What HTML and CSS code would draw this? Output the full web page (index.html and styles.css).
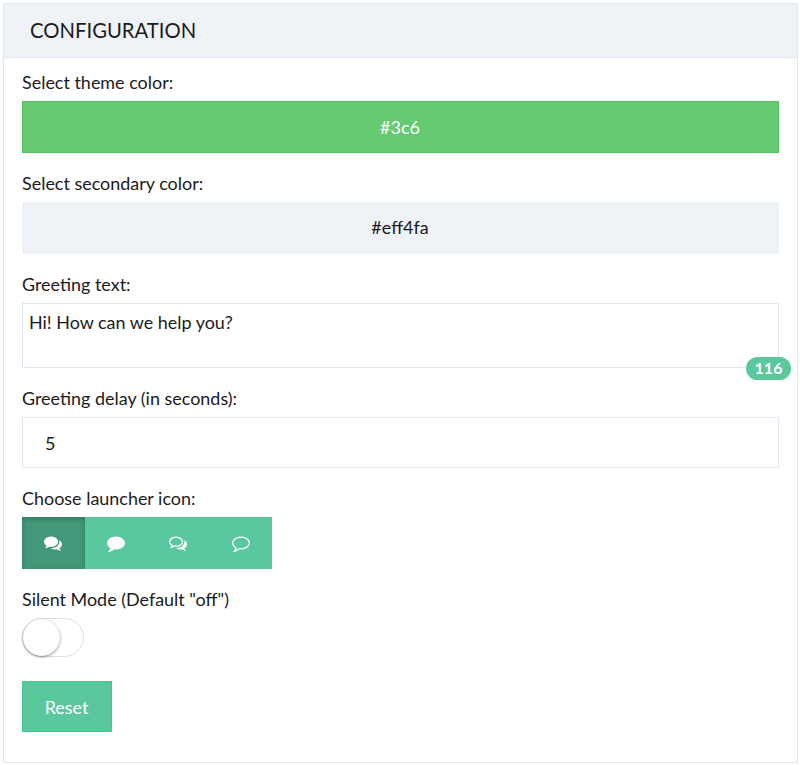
FILE: index.html
```html
<!DOCTYPE html>
<html lang="en">
<head>
<meta charset="utf-8">
<title>Configuration</title>
<link rel="stylesheet" href="styles.css">
</head>
<body>
<section class="panel">
  <header class="panel-header"><h1 class="panel-title">CONFIGURATION</h1></header>
  <div class="panel-body">
    <div class="group">
      <div class="label">Select theme color:</div>
      <div class="swatch swatch-theme">#3c6</div>
    </div>
    <div class="group">
      <div class="label">Select secondary color:</div>
      <div class="swatch swatch-secondary">#eff4fa</div>
    </div>
    <div class="group">
      <div class="label">Greeting text:</div>
      <div class="textarea">Hi! How can we help you?<span class="badge">116</span></div>
    </div>
    <div class="group">
      <div class="label">Greeting delay (in seconds):</div>
      <div class="input">5</div>
    </div>
    <div class="group">
      <div class="label">Choose launcher icon:</div>
      <div class="icons">
        <div class="icon-btn active"><svg viewBox="0 0 1792 1792"><path d="M1408 768q0 139-94 257t-256.5 186.5-353.5 68.5q-86 0-176-16-124 88-278 128-36 9-86 16h-3q-11 0-20.5-8t-11.5-21q-1-3-1-6.5t.5-6.5 2-6l2.5-5 3.5-5.5 4-5 4.5-5 4-4.500q5-6 23-25t26-29.500 22.500-29 25-38.500 20.500-44q-124-72-195-177t-71-224q0-139 94-257t256.500-186.500 353.500-68.500 353.500 68.500 256.500 186.500 94 257zm384 256q0 120-71 224.500t-195 176.500q10 24 20.500 44t25 38.500 22.500 29 26 29.500 23 25q1 1 4 4.500t4.500 5 4 5 3.500 5.500l2.500 5 2 6 .5 6.500-1 6.500q-3 14-13 22t-22 7q-50-7-86-16-154-40-278-128-90 16-176 16-271 0-472-132 58 4 88 4 161 0 309-45t264-129q125-92 192-212t67-254q0-77-23-152 129 71 204 178t75 230z"/></svg></div>
        <div class="icon-btn"><svg viewBox="0 0 1792 1792"><path d="M1792 896q0 174-120 321.500t-326 233-450 85.500q-70 0-145-8-198 175-460 242-49 14-114 22-17 2-30.500-9t-17.500-29v-1q-3-4-.5-12t2-10 4.500-9.500l6-9 7-8.500 8-9q7-8 31-34.500t34.500-38 31-39.500 32.500-51 27-59 26-76q-157-89-247.500-220t-90.500-281q0-130 71-248.500t191-204.500 286-136.500 348-50.500q244 0 450 85.500t326 233 120 321.500z"/></svg></div>
        <div class="icon-btn"><svg viewBox="0 0 1792 1792"><path d="M704 384q-153 0-286 52t-211.500 141-78.500 191q0 82 53 158t149 132l97 56-35 84q34-20 62-39l44-31 53 10q78 14 153 14 153 0 286-52t211.500-141 78.500-191-78.500-191-211.500-141-286-52zm0-128q191 0 353.500 68.500t256.500 186.500 94 257-94 257-256.500 186.500-353.500 68.500q-86 0-176-16-124 88-278 128-36 9-86 16h-3q-11 0-20.500-8t-11.500-21q-1-3-1-6.500t.5-6.500 2-6l2.500-5 3.500-5.500 4-5 4.500-5 4-4.500q5-6 23-25t26-29.500 22.500-29 25-38.500 20.500-44q-124-72-195-177t-71-224q0-139 94-257t256.500-186.500 353.500-68.500zm822 1169q10 24 20.500 44t25 38.500 22.500 29 26 29.500 23 25q1 1 4 4.500t4.500 5 4 5 3.500 5.500l2.500 5 2 6 .5 6.500-1 6.500q-3 14-13 22t-22 7q-50-7-86-16-154-40-278-128-90 16-176 16-271 0-472-132 58 4 88 4 161 0 309-45t264-129q125-92 192-212t67-254q0-77-23-152 129 71 204 178t75 230q0 120-71 224.500t-195 176.500z"/></svg></div>
        <div class="icon-btn"><svg viewBox="0 0 1792 1792"><path d="M896 384q-204 0-381.500 69.500t-282 187.500-104.500 255q0 112 71.500 213.500t201.500 175.500l87 50-27 96q-24 91-70 172 152-63 275-171l43-38 57 6q69 8 130 8 204 0 381.500-69.500t282-187.500 104.500-255-104.500-255-282-187.500-381.500-69.500zm896 512q0 174-120 321.500t-326 233-450 85.500q-70 0-145-8-198 175-460 242-49 14-114 22h-5q-15 0-27-10.500t-16-27.500v-1q-3-4-.5-12t2-10 4.500-9.500l6-9 7-8.500 8-9q7-8 31-34.500t34.500-38 31-39.500 32.500-51 27-59 26-76q-157-89-247.500-220t-90.500-281q0-174 120-321.500t326-233 450-85.500 450 85.500 326 233 120 321.500z"/></svg></div>
      </div>
    </div>
    <div class="group silent">
      <div class="label">Silent Mode (Default "off")</div>
      <div class="toggle"><div class="knob"></div></div>
    </div>
    <button class="reset">Reset</button>
  </div>
</section>
</body>
</html>
```
FILE: styles.css
```css
* { box-sizing: border-box; }
body {
  margin: 0;
  padding: 3px 2px 2px 3px;
  background: #fff;
  color: #1b1b1d;
  font: 17.95px/26px Lato, Carlito, sans-serif;
}
.panel {
  height: 760px;
  border: 1px solid #dfe8f1;
}
.panel-header {
  height: 54px;
  padding: 0 26px;
  background: #eff3f8;
  border-bottom: 1px solid #dfe8f1;
}
.panel-title {
  margin: 0;
  font-size: 20.3px;
  font-weight: 400;
  line-height: 53px;
}
.panel-body { padding: 12px 18px 0; }
.group { margin-bottom: 18px; }
.label { height: 31px; line-height: 25px; }
.swatch {
  height: 52px;
  padding-right: 1px;
  line-height: 51px;
  text-align: center;
}
.swatch-theme {
  background: #65ca72;
  border: 1px solid #50c461;
  line-height: 50px;
  color: #fff;
}
.swatch-secondary { background: #eff3f8; }
.textarea {
  position: relative;
  height: 65px;
  padding: 5px 6px;
  border: 1px solid #dfe8f1;
}
.badge {
  position: absolute;
  right: -13px;
  bottom: -13px;
  width: 45px;
  height: 23px;
  border-radius: 12px;
  background: #5ac89c;
  color: #fff;
  font-size: 16px;
  font-weight: 700;
  line-height: 22px;
  text-align: center;
}
.input {
  height: 51px;
  padding: 0 22px;
  border: 1px solid #dfe8f1;
  line-height: 51px;
}
.icons {
  display: flex;
  width: 250px;
  height: 52px;
  background: #5ac89c;
}
.icon-btn {
  display: flex;
  flex: 1;
  align-items: center;
  justify-content: center;
}
.icon-btn svg { width: 18px; height: 18px; fill: #fff; }
.active {
  background: #429878;
  box-shadow: inset 0 2px 5px rgba(0, 60, 35, .3);
}
.silent { margin-bottom: 24px; }
.toggle {
  width: 62px;
  height: 39px;
  border: 1px solid #dfdfdf;
  border-radius: 20px;
}
.knob {
  width: 37px;
  height: 37px;
  border-radius: 50%;
  background: #fff;
  box-shadow: 0 1px 3px rgba(0, 0, 0, .45);
}
.reset {
  display: block;
  width: 90px;
  height: 51px;
  padding: 0 1px 0 0;
  border: 1px solid #3fc692;
  background: #5ac89c;
  color: #fff;
  font: inherit;
}
```
